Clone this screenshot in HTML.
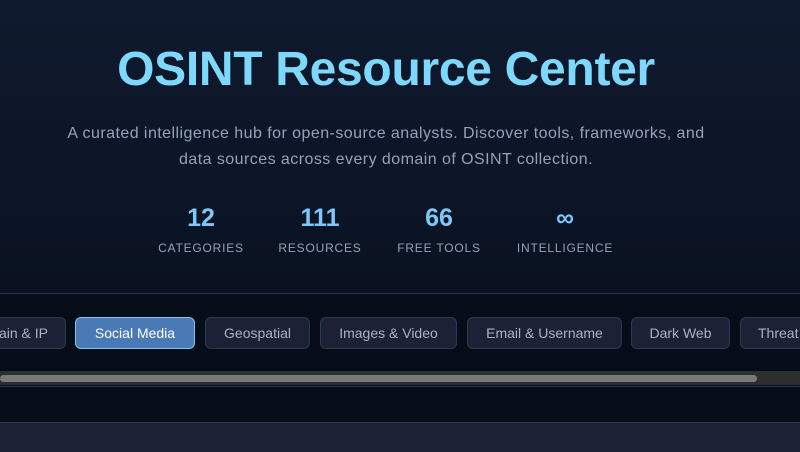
<!DOCTYPE html>
<html><head><style>
*{margin:0;padding:0;box-sizing:border-box}
body{width:800px;height:452px;overflow:hidden;background:#070d18;font-family:"Liberation Sans",sans-serif}
.hero{height:294px;background:linear-gradient(180deg,#0f1a2e 0%,#0a1221 100%);border-bottom:1px solid #1e3a5f;width:800px;position:relative}
.c{width:772px;text-align:center;position:absolute;left:0}
h1{top:42px;font-size:48px;font-weight:bold;color:#7dd8fb;letter-spacing:-0.3px}
.p{top:121px;font-size:16px;line-height:26px;color:#94a3b8;letter-spacing:0.45px}
.s{position:absolute;top:203px;width:140px;text-align:center}
.s b{display:block;font-size:25px;color:#7dc8fa;line-height:30px}
.s span{display:block;font-size:12px;letter-spacing:0.8px;color:#94a3b8;margin-top:8px;white-space:nowrap}
.chip{position:absolute;top:317px;height:32px;border:1px solid #2a3a56;border-radius:6px;background:#1b2235;color:#a8b2c3;font-size:14px;line-height:30px;text-align:center;white-space:nowrap}
.act{background:#4a7ab5;border-color:#7ec4f3;color:#fff}
.track{position:absolute;top:371px;left:0;width:800px;height:14px;background:#2e2e2e}
.thumb{position:absolute;top:375px;left:0;width:757px;height:7px;background:#7a7a7a;border-radius:4px}
.l1{position:absolute;top:386px;left:0;width:800px;height:1px;background:#1e3a5f}
.foot{position:absolute;top:422px;left:0;width:800px;height:30px;background:#1c2133;border-top:1px solid #1e3a5f}
</style></head><body>
<div class="hero">
<h1 class="c">OSINT Resource Center</h1>
<div class="c p">A curated intelligence hub for open-source analysts. Discover tools, frameworks, and<br>data sources across every domain of OSINT collection.</div>
<div class="s" style="left:131px"><b>12</b><span>CATEGORIES</span></div>
<div class="s" style="left:250px"><b>111</b><span>RESOURCES</span></div>
<div class="s" style="left:369px"><b>66</b><span>FREE TOOLS</span></div>
<div class="s" style="left:495px"><b>∞</b><span>INTELLIGENCE</span></div>
</div>
<div class="chip" style="left:-40px;width:106px;text-align:right;padding-right:17px">Domain &amp; IP</div>
<div class="chip act" style="left:75px;width:120px">Social Media</div>
<div class="chip" style="left:205px;width:105px">Geospatial</div>
<div class="chip" style="left:320px;width:137px">Images &amp; Video</div>
<div class="chip" style="left:467px;width:155px">Email &amp; Username</div>
<div class="chip" style="left:631px;width:99px">Dark Web</div>
<div class="chip" style="left:740px;width:120px;text-align:left;padding-left:17px">Threat Intel</div>
<div class="track"></div><div class="thumb"></div><div class="l1"></div>
<div class="foot"></div>
</body></html>
